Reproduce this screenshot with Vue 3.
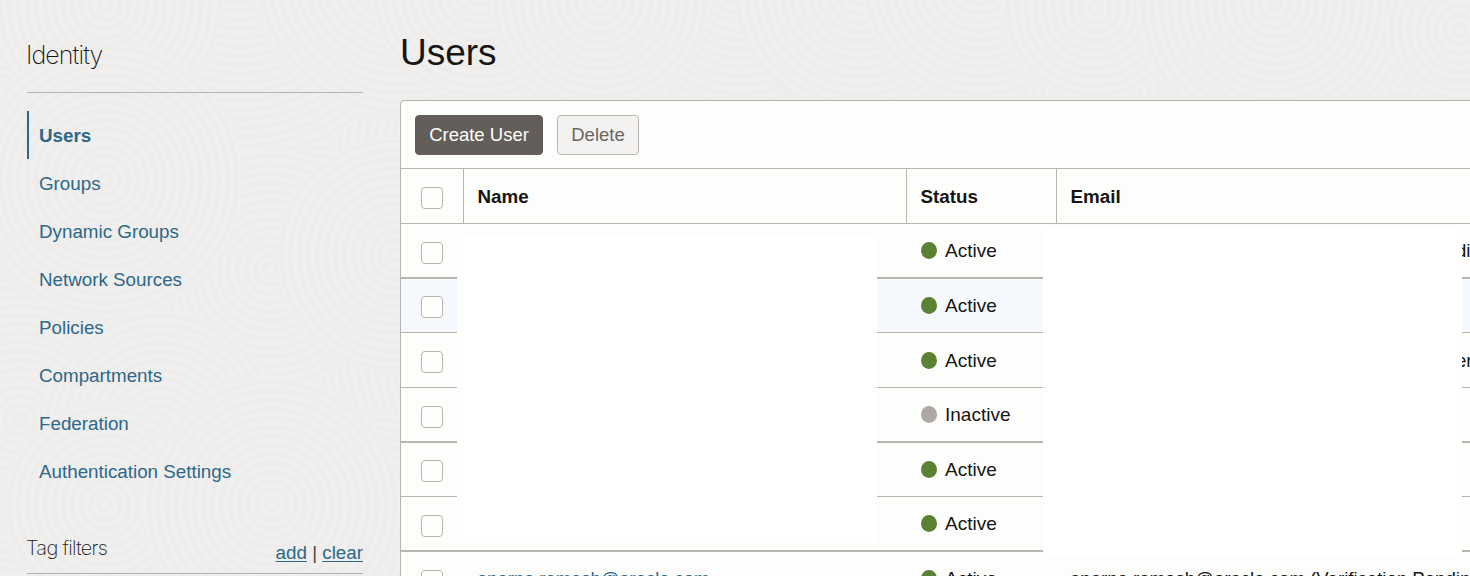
<script setup>
const links = [
  { label: 'Users', active: true },
  { label: 'Groups' },
  { label: 'Dynamic Groups' },
  { label: 'Network Sources' },
  { label: 'Policies' },
  { label: 'Compartments' },
  { label: 'Federation' },
  { label: 'Authentication Settings' },
]

const rows = [
  { status: 'Active', size: 'thick', tail: 'di' },
  { status: 'Active', size: 'short', hover: true },
  { status: 'Active', size: 'normal', tail: 'er' },
  { status: 'Inactive', size: 'thick' },
  { status: 'Active', size: 'short' },
  { status: 'Active', size: 'thick' },
  {
    status: 'Active',
    size: 'last',
    name: 'aparna.ramesh@oracle.com',
    email: 'aparna.ramesh@oracle.com (Verification Pending)',
  },
]

// Overlapping discs of concentric rings, painted back to front.
const discs = [
  [735, 300, 900],
  [10, -10, 150], [330, 70, 150], [480, 150, 150], [760, 60, 150], [920, 90, 150],
  [20, 420, 160], [370, 560, 150], [1200, 90, 150], [1400, 80, 150],
  [240, -40, 200], [105, 5, 115], [400, -30, 150],
  [480, -10, 110], [740, -20, 130], [600, 0, 110], [860, -10, 125], [980, -20, 120],
  [1095, 8, 95], [1275, 4, 140], [1460, 30, 75],
  [270, 270, 120], [395, 255, 118], [160, 430, 120], [105, 180, 138],
  [105, 505, 105], [272, 505, 130],
].map(([x, y, r]) => {
  const rings = []
  for (let k = 6; k < r; k += 9) rings.push(k)
  return { x, y, r, rings }
})
</script>

<template>
  <div class="page">
    <svg class="waves" width="1470" height="576" viewBox="0 0 1470 576" aria-hidden="true">
      <g v-for="(d, i) in discs" :key="i">
        <circle :cx="d.x" :cy="d.y" :r="d.r" class="disc" />
        <circle v-for="k in d.rings" :key="k" :cx="d.x" :cy="d.y" :r="k" class="ring" />
      </g>
    </svg>

    <aside class="sidebar">
      <h2 class="side-title"><span>Identity</span></h2>
      <nav class="nav">
        <a v-for="l in links" :key="l.label" class="nav-link" :class="{ active: l.active }">{{ l.label }}</a>
      </nav>
      <div class="filters">
        <span class="filters-title">Tag filters</span>
        <span class="filters-actions"><a>add</a> | <a>clear</a></span>
      </div>
    </aside>

    <main class="main">
      <h1 class="title">Users</h1>
      <section class="panel">
        <div class="toolbar">
          <button class="btn primary">Create User</button>
          <button class="btn secondary">Delete</button>
        </div>
        <div class="table">
          <div class="row head">
            <div class="cell check"><i class="box"></i></div>
            <div class="cell">Name</div>
            <div class="cell">Status</div>
            <div class="cell">Email</div>
          </div>
          <div v-for="(r, i) in rows" :key="i" class="row" :class="[r.size, { hover: r.hover }]">
            <div class="cell check"><i class="box"></i></div>
            <div class="cell name"><a>{{ r.name }}</a></div>
            <div class="cell status"><i class="dot" :class="{ off: r.status === 'Inactive' }"></i>{{ r.status }}</div>
            <div class="cell email">
              <span v-if="r.email">{{ r.email }}</span>
              <span v-if="r.tail" class="tail">{{ r.tail }}</span>
            </div>
          </div>
          <div class="cover cover-name"></div>
          <div class="cover cover-email"></div>
        </div>
      </section>
    </main>
  </div>
</template>

<style>
html, body { margin: 0; overflow: hidden; }
</style>

<style scoped>
.page {
  position: relative;
  display: flex;
  width: 1470px;
  height: 576px;
  overflow: hidden;
  box-sizing: border-box;
  background: #f0efee;
  color: #161513;
  font: 19px/24px "Liberation Sans", Arial, sans-serif;
}
.page *, .page *::before { box-sizing: border-box; }
.waves { position: absolute; left: 0; top: 0; }
.disc { fill: #f0efee; }
.ring { fill: none; stroke: #edeceb; stroke-width: 3.5; }

.sidebar { position: relative; width: 336px; margin-left: 27px; flex: none; }
.side-title {
  height: 93px;
  margin: 0 0 18px;
  padding-top: 39px;
  border-bottom: 1px solid #b5b3b1;
  font: 200 25px/32px Inter, "Liberation Sans", sans-serif;
  letter-spacing: -0.9px;
  text-indent: -1px;
}
.nav { display: flex; flex-direction: column; }
.nav-link {
  height: 48px;
  padding-left: 12px;
  padding-top: 1px;
  font-size: 18.8px;
  line-height: 48px;
  color: #2c6889;
  white-space: nowrap;
}
.nav-link.active { border-left: 2px solid #2c6889; padding-left: 10px; font-weight: 700; }
.filters {
  display: flex;
  justify-content: space-between;
  align-items: flex-start;
  height: 79px;
  padding-top: 40px;
  border-bottom: 1px solid #b5b3b1;
}
.filters-title { font: 200 20px/26px Inter, "Liberation Sans", sans-serif; letter-spacing: -0.7px; text-indent: -1px; }
.filters-actions { font-size: 18.8px; margin-top: 6px; line-height: 24px; color: #444; }
.filters-actions a { color: #2c6889; text-decoration: underline; text-decoration-thickness: 1px; text-underline-offset: 2px; }

.main { position: relative; width: 1107px; margin-left: 37px; flex: none; }
.title { height: 100px; margin: 0; padding-top: 31px; font-size: 37px; font-weight: 400; line-height: 44px; }
.panel { border: 1px solid #b8b2ae; border-radius: 4px; background: #fdfdfb; height: 520px; }
.toolbar { display: flex; gap: 14px; height: 68px; padding: 14px; border-bottom: 1px solid #bab4ae; }
.btn {
  height: 40px;
  padding: 0;
  border: 1px solid #645e5a;
  border-radius: 4px;
  font: 18.5px/36px "Liberation Sans", Arial, sans-serif;
  white-space: nowrap;
}
.primary { width: 128px; background: #645e5a; color: #fdfdfb; }
.secondary { width: 82px; background: #f3f2f1; border-color: #b9b5b2; color: #6b6662; }

.table { position: relative; }
.row {
  display: grid;
  grid-template-columns: 62px 443px 150px 1fr;
  height: 55px;
  border-bottom: 1px solid #bab4ae;
}
.row.short { height: 54px; }
.row.thick { border-bottom-width: 2px; }
.row.hover { background: #f5f9fd; }
.cell { display: flex; align-items: center; padding-left: 14px; white-space: nowrap; overflow: hidden; }
.row.normal .cell { padding-top: 1px; }
.row.last .cell { padding-bottom: 1px; }
.head { font-weight: 700; font-size: 18.8px; }
.head .cell { padding-top: 2px; }
.head .cell + .cell { border-left: 1px solid #bab4ae; padding-left: 13.5px; }
.row .cell.check { padding: 18px 0 0 20px; align-items: flex-start; }
.row.normal .cell.check { padding-top: 18px; }
.row.short .cell.check { padding-top: 17px; }
.cell.status { padding-left: 15px; }
.box { width: 22px; height: 22px; flex: none; border: 1px solid #bab2ab; border-radius: 4px; background: #fefefd; }
.name a { font-size: 18.4px; color: #2c6889; }
.email { font-size: 18.6px; }
.tail { margin-left: 386px; }
.dot { width: 16px; height: 17px; margin-right: 8px; border-radius: 50%; background: #5b8133; }
.dot.off { background: #aea8a6; }
.cover { position: absolute; background: #fff; }
.cover-name { left: 56px; top: 66px; width: 420px; height: 308px; }
.cover-email { left: 642px; top: 59px; width: 419px; height: 329px; }
</style>
